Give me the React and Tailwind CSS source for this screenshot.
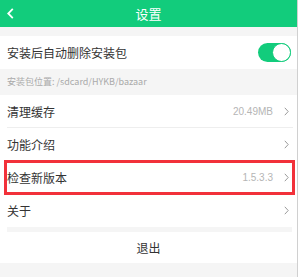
import React from 'react';

const font = { fontFamily: '"Noto Sans CJK SC", "Noto Sans", sans-serif' };

const Chevron = () => (
  <svg width="5" height="9" viewBox="0 0 5 9" className="ml-[11px]">
    <path d="M0.8 0.8 L4.2 4.5 L0.8 8.2" fill="none" stroke="#9a9a9a" strokeWidth="1" />
  </svg>
);

const Row = ({ label, value, last }) => (
  <div className="flex h-[33px] items-center pl-[7px] pr-[8px] relative">
    <span className="text-[12px] text-[#333]">{label}</span>
    <span className="ml-auto text-[10px] text-[#b5b5b5]" style={{ fontFamily: '"Liberation Sans", sans-serif' }}>{value}</span>
    <Chevron />
    {!last && <div className="absolute bottom-0 left-[7px] right-[4px] h-px bg-[#eeeeee]" />}
  </div>
);

export default function App() {
  return (
    <div className="flex w-[300px] h-[277px] overflow-hidden bg-white" style={font}>
      <div className="flex flex-col w-[297px] h-full bg-[#f5f5f5]">
        <div className="relative flex items-center justify-center h-[27px] bg-[#12cc7c] shrink-0">
          <svg width="7" height="11" viewBox="0 0 7 11" className="absolute left-[7px] top-[8px]">
            <path d="M5.8 0.8 L1.2 5.5 L5.8 10.2" fill="none" stroke="#fff" strokeWidth="1.8" />
          </svg>
          <span className="text-[13px] text-white">设置</span>
        </div>
        <div className="h-[9px] shrink-0" />
        <div className="flex items-center h-[33px] bg-white pl-[7px] pr-[6px] shrink-0">
          <span className="text-[12px] text-[#333]">安装后自动删除安装包</span>
          <div className="ml-auto flex items-center justify-end w-[33px] h-[19px] rounded-full bg-[#12cc7c]">
            <div className="w-[19px] h-[19px] rounded-full bg-white border border-[#12cc7c]" />
          </div>
        </div>
        <div className="flex items-center h-[26px] pl-[7px] shrink-0">
          <span className="text-[9px] text-[#aaaaaa]">安装包位置: /sdcard/HYKB/bazaar</span>
        </div>
        <div className="bg-white shrink-0">
          <Row label="清理缓存" value="20.49MB" />
          <Row label="功能介绍" value="" />
          <div className="relative">
            <Row label="检查新版本" value="1.5.3.3" last />
            <div className="absolute left-[4px] right-[2px] top-[-1px] bottom-[-1px] border-[3px] border-[#f2313a]" />
          </div>
          <Row label="关于" value="" last />
          <div className="mx-[7px] mr-[5px] h-[5px] bg-[#f5f5f5]" />
          <div className="flex items-center justify-center h-[31px]">
            <span className="text-[12px] text-[#333]">退出</span>
          </div>
        </div>
      </div>
      <div className="w-px h-full bg-[#d0d0d0]" />
    </div>
  );
}
